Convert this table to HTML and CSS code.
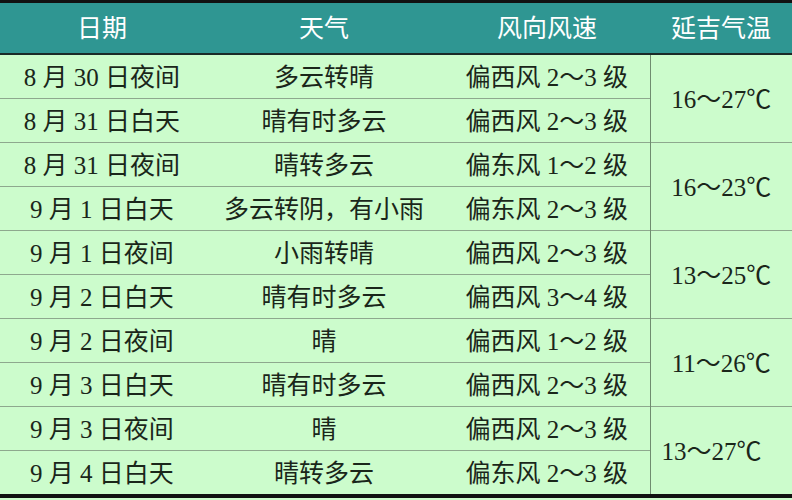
FILE: index.html
```html
<!DOCTYPE html>
<html lang="zh">
<head>
<meta charset="utf-8">
<link rel="stylesheet" href="styles.css">
</head>
<body>
<table class="weather">
  <colgroup>
    <col class="c1"><col class="c2"><col class="c3"><col class="c4">
  </colgroup>
  <thead>
    <tr><th>日期</th><th>天气</th><th>风向风速</th><th>延吉气温</th></tr>
  </thead>
  <tbody>
    <tr class="top"><td>8 月 30 日夜间</td><td>多云转晴</td><td>偏西风 2～3 级</td><td class="temp" rowspan="2">16～27℃</td></tr>
    <tr><td>8 月 31 日白天</td><td>晴有时多云</td><td>偏西风 2～3 级</td></tr>
    <tr class="top"><td>8 月 31 日夜间</td><td>晴转多云</td><td>偏东风 1～2 级</td><td class="temp" rowspan="2">16～23℃</td></tr>
    <tr><td>9 月 1 日白天</td><td>多云转阴，有小雨</td><td>偏东风 2～3 级</td></tr>
    <tr class="top"><td>9 月 1 日夜间</td><td>小雨转晴</td><td>偏西风 2～3 级</td><td class="temp" rowspan="2">13～25℃</td></tr>
    <tr><td>9 月 2 日白天</td><td>晴有时多云</td><td>偏西风 3～4 级</td></tr>
    <tr class="top"><td>9 月 2 日夜间</td><td>晴</td><td>偏西风 1～2 级</td><td class="temp" rowspan="2">11～26℃</td></tr>
    <tr><td>9 月 3 日白天</td><td>晴有时多云</td><td>偏西风 2～3 级</td></tr>
    <tr class="top"><td>9 月 3 日夜间</td><td>晴</td><td>偏西风 2～3 级</td><td class="temp last" rowspan="2">13～27℃</td></tr>
    <tr><td>9 月 4 日白天</td><td>晴转多云</td><td>偏东风 2～3 级</td></tr>
  </tbody>
</table>
</body>
</html>
```

FILE: styles.css
```css
html, body {
  margin: 0;
  padding: 0;
  background: #ccfccc;
}
.weather {
  width: 792px;
  border-collapse: collapse;
  table-layout: fixed;
  background: #ccfccc;
  border-top: 3px solid #111;
  border-bottom: 4px solid #111;
  font-family: "Liberation Serif", "Noto Sans CJK SC", serif;
  color: #1a261a;
}
.c1 { width: 204px; }
.c2 { width: 240px; }
.c3 { width: 206px; }
.c4 { width: 142px; }
.weather th {
  height: 47px;
  padding: 0 0 3px;
  background: #2f9692;
  color: #fff;
  font-family: "Noto Sans CJK SC", sans-serif;
  font-weight: normal;
  font-size: 25px;
  line-height: 1;
  border-bottom: 2px solid #1a2a28;
  text-align: center;
  vertical-align: middle;
}
.weather td {
  height: 41px;
  padding: 2px 0 0;
  font-size: 25px;
  text-align: center;
  vertical-align: middle;
  border-top: 1px solid #8ea88e;
  line-height: 1;
}
.weather td.temp {
  border-left: 1px solid #6f8c6f;
}
.weather td.last {
  text-align: left;
  padding-left: 11px;
}
```
